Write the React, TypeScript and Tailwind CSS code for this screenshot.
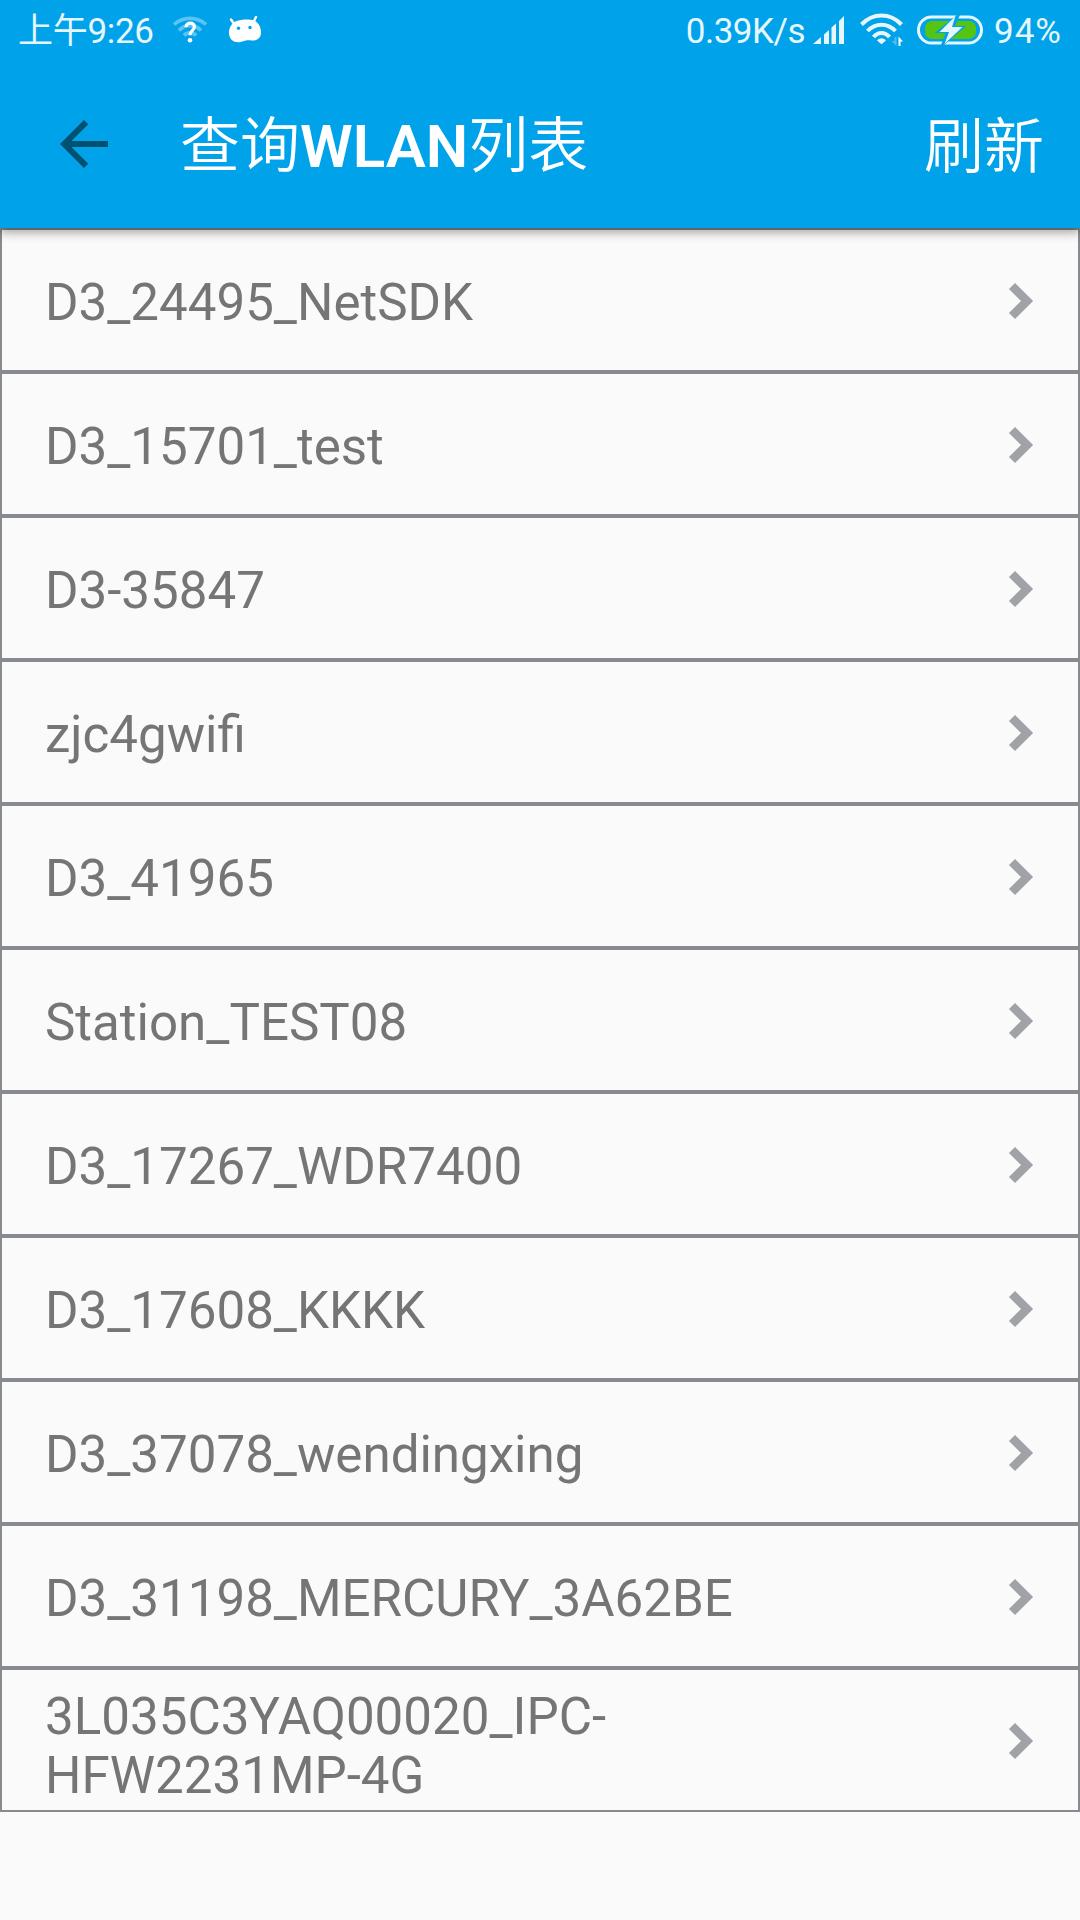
const networks = [
  "D3_24495_NetSDK", "D3_15701_test", "D3-35847", "zjc4gwifi", "D3_41965", "Station_TEST08",
  "D3_17267_WDR7400", "D3_17608_KKKK", "D3_37078_wendingxing", "D3_31198_MERCURY_3A62BE",
  "3L035C3YAQ00020_IPC-HFW2231MP-4G",
];

function UnknownWifi() {
  return (
    <svg className="h-[28px] w-[36px]" viewBox="0 0 36 28" fill="none">
      <g stroke="#5cc4f4" strokeWidth="3.6">
        <path d="M2 8.5C11 .3 25 .3 34 8.5" />
        <path d="M7 14.5C13 8 23 8 29 14.5" />
        <path d="M12 19.5C15 16 21 16 24 19.5" />
      </g>
      <path d="M14 11c.2-5.2 8.4-5.200 8.400 0 0 3.500-4.400 3.500-4.400 8.200" stroke="#fff" strokeWidth="3.200" />
      <circle cx="18" cy="24.200" r="2.300" fill="#fff" />
    </svg>
  );
}

function Robot() {
  return (
    <svg className="h-[28px] w-[36px]" viewBox="0 0 36 28" fill="none">
      <path d="M4 3.500l3.500 5M29 1l-3 6" stroke="#fff" strokeWidth="2.400" strokeLinecap="round" />
      <path d="M9 5.200C15 3 22 3 27 4.500c5 2 7.500 8 7 13-.5 4.500-4 7-8 7-4 0-5-.5-7 0-3 .5-4 1.700-8 1.700-6 0-9-4.500-9-9.500 0-5 2.500-9.500 7-11.500z" fill="#fff" />
      <circle cx="11.500" cy="12.300" r="1.700" fill="#00a2ea" />
      <circle cx="23" cy="11.500" r="1.700" fill="#00a2ea" />
    </svg>
  );
}

function Signal() {
  return (
    <svg className="h-[29px] w-[32px]" viewBox="0 0 32 29" fill="#e6f6fd">
      <path d="M0 28l8-7v7zM11 18.500l5-4.500v14h-5zM18.500 11.500l4.500-4v20.500h-4.500zM26 5l5-5v28h-5z" />
    </svg>
  );
}

function Wifi() {
  return (
    <svg className="h-[34px] w-[44px]" viewBox="0 0 44 34" fill="none" stroke="#e6f6fd" strokeWidth="4">
      <path d="M1.500 11.500C13-.5 30-.5 41.500 11.500M7.500 18c8-8.500 20-8.500 28 0M13.500 24c4.500-5.500 11.500-5.500 16 0" />
      <path d="M17 27.500c2.500-3 6.500-3 9 0l-4.500 3.700z" fill="#e6f6fd" stroke="none" />
      <path d="M36.500 24v9l-5-5h3v-4z" fill="#4dbef1" stroke="none" />
      <path d="M38.500 33V23.500l4.500 5h-2.500V33z" fill="#fff" stroke="none" />
    </svg>
  );
}

function Battery() {
  return (
    <svg className="h-[30px] w-[66px]" viewBox="0 0 66 30" fill="none">
      <rect x="1.500" y="2" width="63" height="26" rx="13" stroke="#e6f6fd" strokeWidth="3" />
      <rect x="8" y="6" width="51" height="18" rx="7" fill="#56c412" />
      <path d="M40 0L17.500 18h11l-4.500 12h3L49 11H38l5-11z" fill="#00a2ea" />
      <path d="M38.500 1L22.500 17h9.500l-4.500 12L45.500 12H35z" fill="#e6f6fd" />
    </svg>
  );
}

export default function App() {
  return (
    <div className="min-h-[1920px] w-[1080px] bg-[#fafafa] font-['Roboto','Noto_Sans_CJK_SC',sans-serif]">
      <header className="relative h-[228px] bg-[#00a2ea] shadow-[0_4px_10px_rgba(0,0,0,0.38)]">
        <div className="flex h-[60px] items-center justify-between pr-[18px] pl-[18px] text-[35px] leading-[56px] text-[#e6f6fd]">
          <div className="flex items-center">
            <span className="w-[154px] pt-1 tracking-[-0.3px] whitespace-nowrap">上午9:26</span>
            <UnknownWifi />
            <span className="w-[19px]" />
            <Robot />
          </div>
          <div className="flex items-center">
            <span className="pt-1 tracking-[-0.5px] whitespace-nowrap">0.39K/s</span>
            <span className="mr-[15px] ml-2"><Signal /></span>
            <Wifi />
            <span className="mr-[11px] ml-[13px]"><Battery /></span>
            <span className="pt-1 tracking-[1px]">94%</span>
          </div>
        </div>
        <div className="flex h-[168px] items-center pr-[36px] pl-[48px] text-white">
          <svg className="size-[72px]" viewBox="0 0 24 24" fill="#00506f">
            <path d="M20 11H7.830l5.590-5.590L12 4l-8 8 8 8 1.410-1.410L7.830 13H20z" />
          </svg>
          <h1 className="ml-[60px] flex-1 pt-[6px] text-[60px] leading-[72px] font-[350]">
            查询<span className="font-semibold">WLAN</span>列表
          </h1>
          <span className="pt-[8px] text-[60px] leading-[72px] font-[350]">刷新</span>
        </div>
      </header>
      <ul>
        {networks.map((name) => (
          <li key={name} className="flex h-[144px] items-center justify-between border-2 border-[#878a8e] pr-[43px] pl-[43px]">
            <span className={`w-[640px] text-[51.1px] leading-[59px] text-[#757575] ${name.length > 30 ? "pt-[11px]" : "pt-[4px]"}`}>{name}</span>
            <svg className="h-[40px] w-[28px]" viewBox="0 0 28 40" fill="none" stroke="#a0a2a7" strokeWidth="8.6">
              <path d="M5 6l15 15L5 36" />
            </svg>
          </li>
        ))}
      </ul>
    </div>
  );
}
